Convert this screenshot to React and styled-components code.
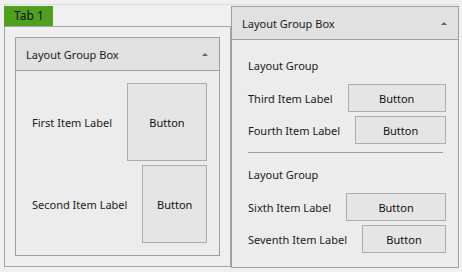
import React from "react";
import styled, { createGlobalStyle } from "styled-components";

const Global = createGlobalStyle`
  html, body { margin: 0; padding: 0; background: #f0f0f0; }
  body { font-family: "Noto Sans", "Open Sans", sans-serif; font-size: 11px; color: #1b1b1b; }
`;

const Page = styled.div`
  width: 462px;
  height: 272px;
  box-sizing: border-box;
  padding: 4px 3px 4px 4px;
  background: #f0f0f0;
`;

const Frame = styled.div`
  display: flex;
  height: 264px;
  border-top: 1px solid #dcdcdc;
  box-sizing: border-box;
  padding-top: 1px;
`;

const TabControl = styled.div`
  width: 227px;
  display: flex;
  flex-direction: column;
  height: 261px;
`;

const TabStrip = styled.div`
  display: flex;
  height: 20px;
`;

const Tab = styled.div`
  width: 49px;
  height: 20px;
  background: #4fa01f;
  box-sizing: border-box;
  padding-left: 10px;
  line-height: 20px;
  color: #111;
  font-size: 12px;
`;

const TabPanel = styled.div`
  flex: 1;
  border: 1px solid #a6a6a6;
  box-sizing: border-box;
  padding: 10px;
  display: flex;
  background: #efefef;
`;

const GroupBox = styled.div`
  flex: 1;
  display: flex;
  flex-direction: column;
  border: 1px solid #a0a0a0;
  box-sizing: border-box;
  background: #ececec;
`;

const Header = styled.div`
  height: 32px;
  flex: none;
  display: flex;
  align-items: center;
  justify-content: space-between;
  padding: 0 10px 0 10px;
  background: #e1e1e1;
  border-bottom: 1px solid #a0a0a0;
`;

const Arrow = styled.span`
  width: 0;
  height: 0;
  border-left: 3px solid transparent;
  border-right: 3px solid transparent;
  border-bottom: 3px solid #6e5f7c;
  margin-right: 1px;
`;

const Content = styled.div`
  flex: 1;
  display: flex;
  flex-direction: column;
  padding: ${(p) => p.$pad};
  gap: 4px;
`;

const Row = styled.div`
  display: flex;
  align-items: center;
  gap: 15px;
  height: ${(p) => p.$h}px;
  flex: none;
`;

const Label = styled.span`
  white-space: nowrap;
`;

const Button = styled.div`
  flex: 1;
  align-self: stretch;
  display: flex;
  align-items: center;
  justify-content: center;
  background: #e5e5e5;
  border: 1px solid #adadad;
  box-sizing: border-box;
  color: #111;
`;

const GroupTitle = styled.div`
  height: 28px;
  line-height: 28px;
  flex: none;
`;

const Divider = styled.div`
  height: 1px;
  background: #a0a0a0;
  margin: 4px 3px 4px 0;
  flex: none;
`;

const RightBox = styled(GroupBox)`
  flex: none;
  width: 228px;
  height: 262px;
`;

export default function App() {
  return (
    <Page>
      <Global />
      <Frame>
        <TabControl>
          <TabStrip>
            <Tab>Tab 1</Tab>
          </TabStrip>
          <TabPanel>
            <GroupBox>
              <Header>
                <span>Layout Group Box</span>
                <Arrow />
              </Header>
              <Content $pad="12px 12px 11px 16px">
                <Row $h={78}>
                  <Label>First Item Label</Label>
                  <Button>Button</Button>
                </Row>
                <Row $h={78}>
                  <Label>Second Item Label</Label>
                  <Button>Button</Button>
                </Row>
              </Content>
            </GroupBox>
          </TabPanel>
        </TabControl>
        <RightBox>
          <Header>
            <span>Layout Group Box</span>
            <Arrow />
          </Header>
          <Content $pad="12px 12px 12px 16px">
            <GroupTitle>Layout Group</GroupTitle>
            <Row $h={28}>
              <Label>Third Item Label</Label>
              <Button>Button</Button>
            </Row>
            <Row $h={28}>
              <Label>Fourth Item Label</Label>
              <Button>Button</Button>
            </Row>
            <Divider />
            <GroupTitle>Layout Group</GroupTitle>
            <Row $h={28}>
              <Label>Sixth Item Label</Label>
              <Button>Button</Button>
            </Row>
            <Row $h={28}>
              <Label>Seventh Item Label</Label>
              <Button>Button</Button>
            </Row>
          </Content>
        </RightBox>
      </Frame>
    </Page>
  );
}
